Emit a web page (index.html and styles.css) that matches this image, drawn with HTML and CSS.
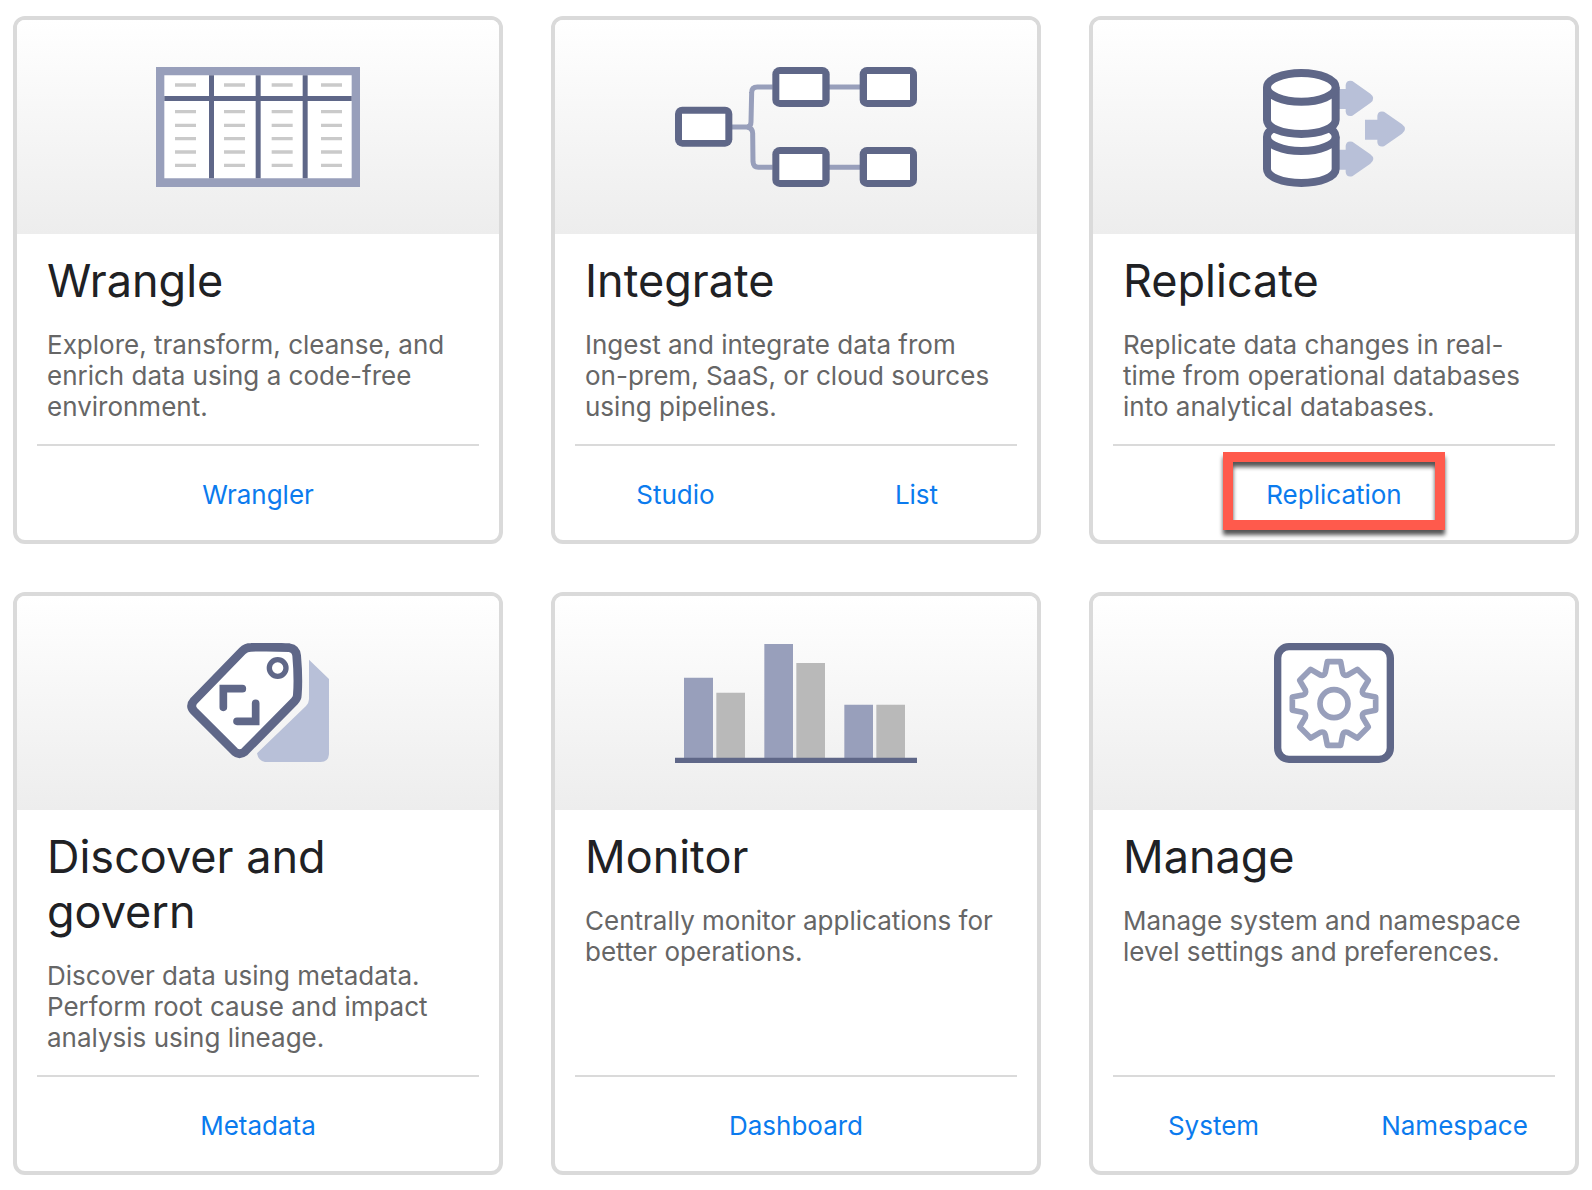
FILE: index.html
```
<!DOCTYPE html>
<html lang="en">

<head>
    <meta charset="UTF-8">
    <meta name="viewport" content="width=device-width, initial-scale=1.0">
    <title>Home</title>
    <link rel="stylesheet" href="styles.css">
</head>

<body>

    <main class="card-grid">

        <section class="card">
            <div class="card-image">
                <svg class="icon" viewBox="48 51 612 360" aria-hidden="true">
                    <path class="fill-mid" d="M48 51h612v360H48z" />
                    <path class="fill-white" d="M73 76h562v309H73z" />
                    <path class="fill-dark" d="M207 76h15v309h-15zM347 76h15v309h-15zM488 76h15v309h-15zM73 138h562v15H73z" />
                    <!-- cell values, one column per path -->
                    <path class="cells" d="M105 105h63M105 185h63M105 226h63M105 266h63M105 306h63M105 346h63" />
                    <path class="cells" d="M252 105h63M252 185h63M252 226h63M252 266h63M252 306h63M252 346h63" />
                    <path class="cells" d="M395 105h63M395 185h63M395 226h63M395 266h63M395 306h63M395 346h63" />
                    <path class="cells" d="M543 105h63M543 185h63M543 226h63M543 266h63M543 306h63M543 346h63" />
                </svg>
            </div>
            <div class="card-body">
                <h2>Wrangle</h2>
                <p>Explore, transform, cleanse, and enrich data using a code-free environment.</p>
            </div>
            <div class="card-links">
                <a href="#wrangler">Wrangler</a>
            </div>
        </section>

        <section class="card">
            <div class="card-image">
                <svg class="icon" viewBox="45 51 726 360" aria-hidden="true">
                    <g class="line-mid wire">
                        <path d="M216 231H262Q273 229 273 216L275 128Q275 111 292 111H338" />
                        <path d="M262 231Q278 235 278 250L279 335Q280 352 295 352H338" />
                        <path d="M507 111H600M507 352H600" />
                    </g>
                    <g class="node">
                        <rect x="45" y="170" width="172" height="120" rx="22" />
                        <rect x="337" y="51" width="172" height="120" rx="22" />
                        <rect x="599" y="51" width="172" height="120" rx="22" />
                        <rect x="337" y="291" width="172" height="120" rx="22" />
                        <rect x="599" y="291" width="172" height="120" rx="22" />
                    </g>
                    <path class="fill-white" d="M66 191h130v79H66zM358 72h129v78H358zM621 72h129v78H621zM358 312h129v78H358zM621 312h129v78H621z" />
                </svg>
            </div>
            <div class="card-body">
                <h2>Integrate</h2>
                <p>Ingest and integrate data from <span class="nowrap">on-prem</span>, SaaS, or cloud sources using pipelines.</p>
            </div>
            <div class="card-links">
                <a href="#studio">Studio</a>
                <a href="#list">List</a>
            </div>
        </section>

        <section class="card">
            <div class="card-image">
                <svg class="icon" viewBox="69 51 426 360" aria-hidden="true">
                    <g class="fill-light">
                        <path d="M290 117h27v-12q2-16 20-12l54 38q18 14 0 28l-54 38q-18 4-20-12v-8h-27z" />
                        <path d="M375 209h37v-12q2-16 20-12l54 38q18 14 0 28l-54 38q-18 4-20-12v-8h-37z" />
                        <path d="M290 299h27v-12q2-16 20-12l54 38q18 14 0 28l-54 38q-18 4-20-12v-8h-27z" />
                    </g>
                    <g class="cylinder">
                        <path d="M81 260V357A103 42 0 0 0 287 357V260" />
                        <ellipse cx="184" cy="260" rx="103" ry="43" />
                        <path d="M81 112V210A103 42 0 0 0 287 210V112" />
                        <ellipse cx="184" cy="112" rx="103" ry="43" />
                    </g>
                </svg>
            </div>
            <div class="card-body">
                <h2>Replicate</h2>
                <p>Replicate data changes in real-time from operational databases into analytical databases.</p>
            </div>
            <div class="card-links">
                <a class="highlight" href="#replication">Replication</a>
            </div>
        </section>

        <section class="card">
            <div class="card-image">
                <svg class="icon" viewBox="51 54 426 360" aria-hidden="true">
                    <path class="fill-light" d="M417 104L477 162V388Q475 411 452 411H285Q265 408 261 385L408 243Q417 234 417 220Z" />
                    <path class="tag" d="M72 227L217 78Q228 67 243 67Q300 65 358 68Q378 71 380 92Q386 160 382 210Q382 220 373 229L224 380Q208 392 194 380L72 258Q58 243 72 227Z" />
                    <circle class="tag-hole" cx="323" cy="129" r="25" />
                    <path class="tag-mark" d="M217 191H160V247M201 289H257V235" />
                </svg>
            </div>
            <div class="card-body">
                <h2>Discover and govern</h2>
                <p>Discover data using metadata. Perform root cause and impact analysis using lineage.</p>
            </div>
            <div class="card-links">
                <a href="#metadata">Metadata</a>
            </div>
        </section>

        <section class="card">
            <div class="card-image">
                <svg class="icon" viewBox="45 54 726 360" aria-hidden="true">
                    <path class="fill-mid" d="M72 158h87v242H72zM313 57h86v343h-86zM553 239h86v161h-86z" />
                    <path class="fill-gray" d="M169 203h86v197h-86zM409 114h86v286h-86zM649 239h86v161h-86z" />
                    <path class="fill-dark" d="M45 398h726v16H45z" />
                </svg>
            </div>
            <div class="card-body">
                <h2>Monitor</h2>
                <p>Centrally monitor applications for better operations.</p>
            </div>
            <div class="card-links">
                <a href="#dashboard">Dashboard</a>
            </div>
        </section>

        <section class="card">
            <div class="card-image">
                <svg class="icon" viewBox="72 54 360 360" aria-hidden="true">
                    <rect class="frame" x="83" y="65" width="338" height="338" rx="34" />
                    <g class="line-mid gear" transform="translate(252 236)">
                        <circle r="42" />
                        <path d="M-20-126H20L26-94Q29-82 41-86L70-103L103-70L86-41Q82-29 94-26L125-20V20L94 26Q82 29 86 41L103 70L70 103L41 86Q29 82 26 94L20 125H-20L-26 94Q-29 82-41 86L-70 103L-103 70L-86 41Q-82 29-94 26L-125 20V-20L-94-26Q-82-29-86-41L-103-70L-70-103L-41-86Q-29-82-26-94Z" />
                    </g>
                </svg>
            </div>
            <div class="card-body">
                <h2>Manage</h2>
                <p>Manage system and namespace level settings and preferences.</p>
            </div>
            <div class="card-links">
                <a href="#system">System</a>
                <a href="#namespace">Namespace</a>
            </div>
        </section>

    </main>

</body>

</html>
```
FILE: styles.css
```
* {
    box-sizing: border-box;
}

body {
    margin: 0;
    background-color: #fff;
    font-family: Inter, "Liberation Sans", Arial, sans-serif;
    font-size: 26px;
    line-height: 31px;
}

.card-grid {
    display: grid;
    grid-template-columns: repeat(3, 1fr);
    gap: 48px;
    padding: 16px 13px 15px;
}

.card {
    display: flex;
    flex-direction: column;
    border: 4px solid #dadada;
    border-radius: 12px;
    background-color: #fff;
}

.card-image {
    display: flex;
    justify-content: center;
    padding: 47px 0;
    border-radius: 8px 8px 0 0;
    background: linear-gradient(#fff, #ededed);
}

.card-body {
    flex: 1;
    padding: 19px 30px 22px;
}

.card-body h2 {
    margin: 0 0 21px;
    color: #202124;
    font-size: 45px;
    font-weight: 400;
    line-height: 55px;
}

.card-body p {
    margin: 0;
    color: #666;
}

.nowrap {
    white-space: nowrap;
}

/* the rule is inset, the links share the full card width */
.card-links {
    display: grid;
    grid-auto-flow: column;
    grid-auto-columns: 1fr;
    justify-items: center;
    padding: 35px 0 30px;
    background: linear-gradient(#dadada, #dadada) center top / calc(100% - 40px) 2px no-repeat;
}

.card-links a {
    color: #0b7bee;
    text-decoration: none;
}

.card-links a:hover {
    text-decoration: underline;
}

.highlight {
    position: relative;
}

.highlight::after {
    content: "";
    position: absolute;
    inset: -27px -43px -20px;
    border: 10px solid #ff5a4c;
    filter: drop-shadow(0 5px 2px #555);
    pointer-events: none;
}

/* Icons */
.icon {
    display: block;
    height: 120px;
    fill: none;
}

.fill-dark,
.node {
    fill: #5f6788;
}

.fill-mid {
    fill: #989fbb;
}

.fill-light {
    fill: #b8c0d8;
}

.fill-gray {
    fill: #b9b9b9;
}

.fill-white {
    fill: #fff;
}

.cells {
    stroke: #cacaca;
    stroke-width: 10;
}

.line-mid {
    stroke: #989fbb;
}

.wire {
    stroke-width: 15;
}

.cylinder {
    fill: #fff;
    stroke: #5f6788;
    stroke-width: 24;
}

.tag {
    fill: #fff;
    stroke: #5f6788;
    stroke-width: 26;
}

.tag-hole {
    stroke: #5f6788;
    stroke-width: 16;
}

.tag-mark {
    stroke: #5f6788;
    stroke-width: 23;
    stroke-linecap: round;
}

.frame {
    fill: #fff;
    stroke: #5f6788;
    stroke-width: 22;
}

.gear {
    stroke-width: 17;
    stroke-linejoin: round;
}
```
